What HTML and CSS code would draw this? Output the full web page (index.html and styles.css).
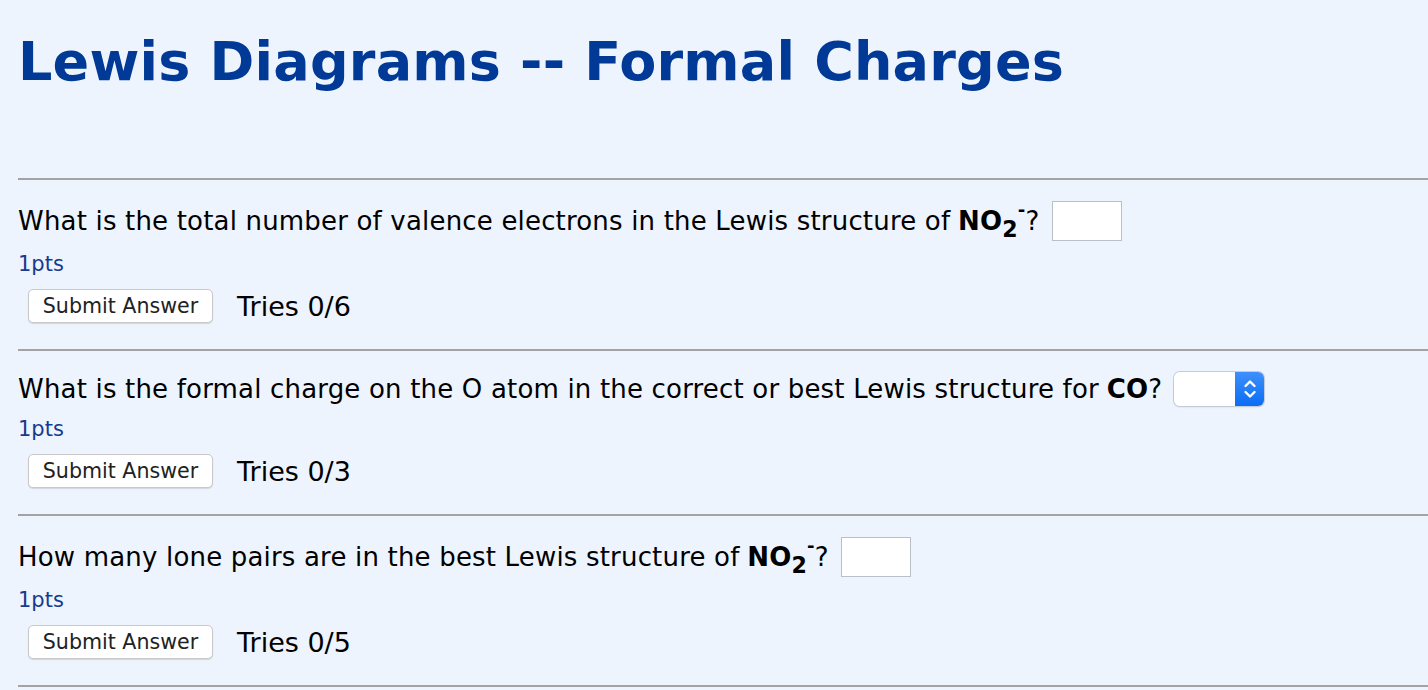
FILE: index.html
```html
<!DOCTYPE html>
<html>
<head>
<meta charset="utf-8">
<link rel="stylesheet" href="styles.css">
<title>Lewis Diagrams -- Formal Charges</title>
</head>
<body>
<h1 class="title">Lewis Diagrams -- Formal Charges</h1>

<hr class="rule rule-first">
<section class="question">
  <div class="prompt">What is the total number of valence electrons in the Lewis structure of <b class="formula">NO<sub>2</sub><sup>-</sup></b>? <input class="answer" type="text"></div>
  <div class="pts">1pts</div>
  <div class="actions"><button class="submit">Submit Answer</button><span class="tries">Tries 0/6</span></div>
</section>

<hr class="rule">
<section class="question">
  <div class="prompt">What is the formal charge on the O atom in the correct or best Lewis structure for <b class="formula">CO</b>? <span class="select"><span class="select-field"></span><span class="select-arrows"><svg width="14" height="24" viewBox="0 0 14 24"><path d="M2.5 9 L7 4.5 L11.5 9 M2.5 15 L7 19.5 L11.5 15" fill="none" stroke="#fff" stroke-width="2.4" stroke-linecap="round" stroke-linejoin="round"/></svg></span></span></div>
  <div class="pts">1pts</div>
  <div class="actions"><button class="submit">Submit Answer</button><span class="tries">Tries 0/3</span></div>
</section>

<hr class="rule">
<section class="question">
  <div class="prompt">How many lone pairs are in the best Lewis structure of <b class="formula">NO<sub>2</sub><sup>-</sup></b>? <input class="answer" type="text"></div>
  <div class="pts">1pts</div>
  <div class="actions"><button class="submit">Submit Answer</button><span class="tries">Tries 0/5</span></div>
</section>
<hr class="rule">
</body>
</html>
```
FILE: styles.css
```css
html, body {
  background: #edf4fe;
}
body {
  margin: 0;
  padding: 0 0 0 18px;
  font-family: "DejaVu Sans", Verdana, sans-serif;
  color: #000;
  overflow: hidden;
}
.title {
  margin: 30px 0 0 0;
  font-size: 54px;
  line-height: 63px;
  letter-spacing: 0.2px;
  font-weight: bold;
  color: #003a96;
  white-space: nowrap;
}
.rule {
  border: none;
  height: 2px;
  background: #a3a3a3;
  margin: 0;
}
.rule-first {
  margin-top: 85px;
}
.question {
  padding-top: 21px;
  padding-bottom: 26px;
}
.prompt {
  font-size: 26px;
  letter-spacing: 0.18px;
  line-height: 34px;
  white-space: nowrap;
  display: flex;
  align-items: center;
}
.formula {
  font-weight: bold;
  margin-left: 0.3em;
}
.formula sub {
  font-size: 0.85em;
  vertical-align: -0.3em;
  line-height: 0;
}
.formula sup {
  font-size: 0.7em;
  vertical-align: 0.75em;
  line-height: 0;
}
.answer {
  width: 70px;
  height: 40px;
  box-sizing: border-box;
  border: 1px solid #b9c0c9;
  background: #fff;
  margin: 0 0 0 12px;
  padding: 0;
}
.select {
  display: inline-flex;
  width: 90px;
  height: 34px;
  margin-left: 12px;
  border-radius: 6px;
  overflow: hidden;
  box-shadow: 0 0 0 1px #c6ccd4, 0 1px 2px rgba(0,0,0,0.15);
}
.select-field {
  flex: 1;
  background: #fff;
}
.select-arrows {
  width: 29px;
  background: linear-gradient(#3e90fb, #0a6cf5);
  display: flex;
  align-items: center;
  justify-content: center;
}
.pts {
  font-size: 21px;
  line-height: 26px;
  color: #153a8e;
  margin-top: 10px;
}
.actions {
  display: flex;
  align-items: center;
  margin-top: 12px;
  margin-left: 10px;
}
.submit {
  font-family: "DejaVu Sans", Verdana, sans-serif;
  font-size: 20.6px;
  color: #222;
  background: #fff;
  border: 1px solid #c8c8c8;
  border-radius: 5px;
  box-shadow: 0 1px 1px rgba(0,0,0,0.12);
  height: 34px;
  width: 185px;
  padding: 0;
}
.tries {
  font-size: 27px;
  margin-left: 24px;
}
```
